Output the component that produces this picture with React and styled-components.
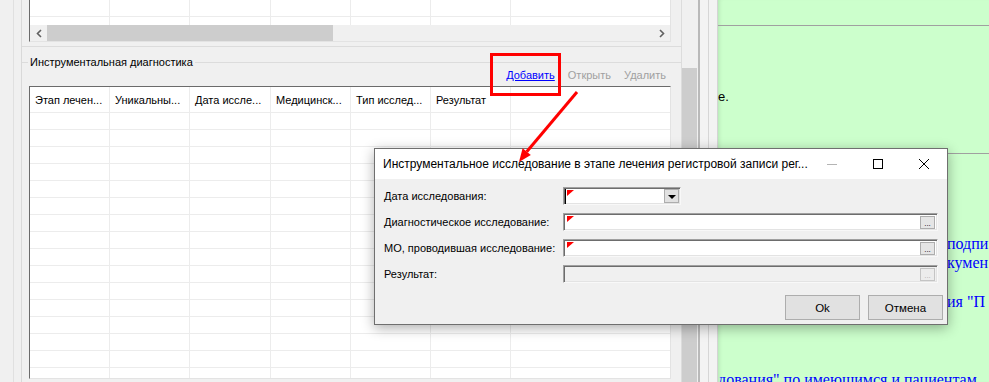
import React from 'react';
import styled, { createGlobalStyle } from 'styled-components';

const GlobalStyle = createGlobalStyle`
  html, body {
    margin: 0;
    padding: 0;
    overflow: hidden;
    background: #f0f0f0;
  }
  body {
    font-family: "Liberation Sans", Arial, sans-serif;
    font-size: 11px;
    color: #000;
  }
  * {
    box-sizing: border-box;
  }
`;

const COLUMNS = '80px 80px 81px 80px 80px 80px 1fr';
const HEADERS = ['Этап лечен...', 'Уникальны...', 'Дата иссле...', 'Медицинск...', 'Тип исслед...', 'Результат', ''];
const EMPTY_ROWS = Array.from({ length: 16 }, (_, i) => i);

const Screen = styled.div`
  position: relative;
  display: flex;
  width: 989px;
  height: 382px;
  overflow: hidden;
`;

const AppArea = styled.div`
  display: flex;
  width: 718px;
  height: 100%;
  background: #f0f0f0;
`;

const Gutter = styled.div`
  width: 22px;
  height: 100%;
  padding-left: 13px;
  border-right: 1px solid #d9d9d9;

  &::before {
    content: '';
    display: block;
    width: 1px;
    height: 100%;
    background: #e0e0e0;
  }
`;

const ContentColumn = styled.div`
  display: flex;
  flex-direction: column;
  width: 660px;
  height: 100%;
  border-right: 1px solid #dcdcdc;
`;

const TopPanel = styled.div`
  height: 47px;
  padding-left: 7px;
  border-bottom: 1px solid #dcdcdc;
`;

const TopGrid = styled.div`
  display: flex;
  flex-direction: column;
  width: 642px;
  height: 42px;
  background: #fff;
  border-left: 1px solid #6b6b6b;
  border-right: 1px solid #e3e3e3;
  border-bottom: 1px solid #e3e3e3;
`;

const GridRow = styled.div`
  display: grid;
  grid-template-columns: ${COLUMNS};
  flex: 0 0 ${(p) => p.$height}px;
  height: ${(p) => p.$height}px;
  border-bottom: ${(p) => (p.$open ? 'none' : '1px solid #ececec')};
`;

const Cell = styled.div`
  display: flex;
  align-items: center;
  padding-left: 5px;
  border-right: 1px solid #ececec;
  white-space: nowrap;
  overflow: hidden;
  font-size: 11px;
  color: #000;

  &:last-child {
    border-right: none;
  }
`;

const HScroll = styled.div`
  display: flex;
  align-items: stretch;
  height: 16px;
  background: #f0f0f0;
`;

const ScrollArrow = styled.div`
  display: flex;
  align-items: center;
  justify-content: center;
  width: 17px;
  color: #606060;
`;

const ScrollTrack = styled.div`
  flex: 1;
  display: flex;
  align-items: stretch;
`;

const HThumb = styled.div`
  width: 286px;
  background: #cdcdcd;
`;

const GroupBox = styled.div`
  flex: 1;
  display: flex;
  flex-direction: column;
  margin-top: 15px;
  padding: 0 10px 0 7px;
  border-top: 1px solid #dcdcdc;
`;

const Legend = styled.div`
  align-self: flex-start;
  margin: -7px 0 0 -1px;
  padding: 0 2px;
  line-height: 13px;
  background: #f0f0f0;
  color: #000;
`;

const Toolbar = styled.div`
  display: flex;
  justify-content: flex-end;
  gap: 13px;
  height: 17px;
  padding-right: 5px;
  line-height: 13px;
  font-size: 11px;
`;

const ToolLink = styled.span`
  color: ${(p) => (p.$enabled ? '#0000ff' : '#a0a0a0')};
  text-decoration: ${(p) => (p.$enabled ? 'underline' : 'none')};
`;

const LowerGrid = styled.div`
  display: flex;
  flex-direction: column;
  height: 293px;
  overflow: hidden;
  background: #fff;
  border-top: 1px solid #6b6b6b;
  border-left: 1px solid #6b6b6b;
  border-right: 1px solid #e3e3e3;
  border-bottom: 1px solid #e3e3e3;
`;

const VScroll = styled.div`
  width: 16px;
  height: 100%;
  padding-top: 68px;
  background: #f0f0f0;
`;

const VThumb = styled.div`
  width: 15px;
  height: 100%;
  background: #cdcdcd;
`;

const Splitter = styled.div`
  display: flex;
  width: 20px;
  height: 100%;
  background: #f3f3f3;
  border-left: 2px solid #b9b9b9;
  border-right: 1px solid #d4d4d4;
  padding-left: 8px;

  &::before {
    content: '';
    width: 1px;
    height: 100%;
    background: #d6d6d6;
  }
`;

const DocPane = styled.div`
  flex: 1;
  height: 100%;
  overflow: hidden;
  background: #ccffcc;
  box-shadow: inset 4px 0 4px -3px rgba(0, 0, 0, 0.12);
  font-family: "Liberation Serif", "Times New Roman", serif;
`;

const PaneRule = styled.div`
  height: 1px;
  margin-top: ${(p) => p.$top}px;
  background: #a0a0a0;
`;

const DocNote = styled.div`
  margin-top: ${(p) => p.$top}px;
  font-family: "Liberation Sans", Arial, sans-serif;
  font-size: 13px;
  line-height: 15px;
  color: #000;
`;

const DocLine = styled.div`
  margin-top: ${(p) => p.$top || 0}px;
  padding-left: ${(p) => p.$indent || 0}px;
  font-size: 16px;
  line-height: 19px;
  color: #0000ff;
  white-space: nowrap;
`;

const Dialog = styled.div`
  position: absolute;
  left: 374px;
  top: 148px;
  z-index: 2;
  width: 574px;
  display: flex;
  flex-direction: column;
  background: #f0f0f0;
  border: 1px solid #6f6f6f;
  box-shadow: 0 3px 12px rgba(0, 0, 0, 0.32);
`;

const TitleBar = styled.div`
  display: flex;
  align-items: center;
  height: 30px;
  padding-left: 8px;
  background: #fff;
`;

const TitleText = styled.div`
  flex: 1;
  font-size: 12px;
  color: #000;
  white-space: nowrap;
`;

const CaptionButton = styled.div`
  display: flex;
  align-items: center;
  justify-content: center;
  width: 46px;
  height: 30px;
`;

const DialogBody = styled.div`
  display: flex;
  flex-direction: column;
  padding-bottom: 4px;
`;

const Form = styled.div`
  display: grid;
  grid-template-columns: 179px 1fr;
  row-gap: 8px;
  padding: 8px 9px 0 9px;
  align-items: center;
`;

const FieldLabel = styled.div`
  font-size: 11px;
  color: #000;
  white-space: nowrap;
`;

const Field = styled.div`
  display: flex;
  align-items: flex-start;
  width: ${(p) => (p.$width ? `${p.$width}px` : 'auto')};
  height: 18px;
  padding: 1px 1px 0 1px;
  background: ${(p) => (p.$disabled ? '#f0f0f0' : '#fff')};
  border-style: solid;
  border-width: 1px;
  border-color: #a0a0a0 #f8f8f8 #f8f8f8 #a0a0a0;
  box-shadow: inset 1px 1px 0 #6d6d6d, inset -1px -1px 0 #e3e3e3;
`;

const Caret = styled.div`
  width: 1px;
  height: 15px;
  margin: 0 1px 0 0;
  background: #000;
`;

const RequiredMark = styled.div`
  width: 0;
  height: 0;
  margin: 1px 0 0 ${(p) => (p.$afterCaret ? 0 : 2)}px;
  border-top: 6px solid #ff0000;
  border-right: 7px solid transparent;
`;

const DropButton = styled.div`
  display: flex;
  align-items: center;
  justify-content: center;
  width: 15px;
  height: 14px;
  margin: 0 0 0 auto;
  background: #e1e1e1;
  border: 1px solid #adadad;

  &::after {
    content: '';
    width: 0;
    height: 0;
    margin-top: 2px;
    border-top: 4px solid #000;
    border-left: 4px solid transparent;
    border-right: 4px solid transparent;
  }
`;

const EllipsisButton = styled.div`
  display: flex;
  align-items: flex-end;
  justify-content: center;
  width: 15px;
  height: 13px;
  margin: 1px 1px 0 auto;
  background: ${(p) => (p.$disabled ? '#ececec' : '#e5e5e5')};
  border: 1px solid ${(p) => (p.$disabled ? '#c4c4c4' : '#adadad')};
  font-size: 8px;
  line-height: 9px;
  color: ${(p) => (p.$disabled ? '#b0b0b0' : '#000')};
`;

const ButtonRow = styled.div`
  display: flex;
  justify-content: flex-end;
  gap: 8px;
  padding: 12px 4px 0 0;
`;

const DialogButton = styled.div`
  display: flex;
  align-items: center;
  justify-content: center;
  width: 75px;
  height: 25px;
  background: #e1e1e1;
  border: 1px solid #adadad;
  font-size: 11.5px;
  color: #000;
`;

const RedFrame = styled.div`
  position: absolute;
  left: 490px;
  top: 53px;
  z-index: 3;
  width: 71px;
  height: 43px;
  border: 3px solid #ff0000;
`;

const PointerArrow = styled.svg`
  position: absolute;
  left: 505px;
  top: 85px;
  z-index: 3;
  overflow: visible;
`;

const Chevron = ({ dir }) => (
  <svg width="6" height="9" viewBox="0 0 6 9">
    <polyline
      points={dir === 'left' ? '5,1 1.5,4.5 5,8' : '1,1 4.5,4.5 1,8'}
      fill="none"
      stroke="#606060"
      strokeWidth="1.6"
    />
  </svg>
);

const App = () => {
  return (
    <>
      <GlobalStyle />
      <Screen>
        <AppArea>
          <Gutter />
          <ContentColumn>
            <TopPanel>
              <TopGrid>
                <GridRow $height={17}>
                  {HEADERS.map((_, i) => (
                    <Cell key={i} />
                  ))}
                </GridRow>
                <GridRow $height={8} $open>
                  {HEADERS.map((_, i) => (
                    <Cell key={i} />
                  ))}
                </GridRow>
                <HScroll>
                  <ScrollArrow>
                    <Chevron dir="left" />
                  </ScrollArrow>
                  <ScrollTrack>
                    <HThumb />
                  </ScrollTrack>
                  <ScrollArrow>
                    <Chevron dir="right" />
                  </ScrollArrow>
                </HScroll>
              </TopGrid>
            </TopPanel>

            <GroupBox>
              <Legend>Инструментальная диагностика</Legend>
              <Toolbar>
                <ToolLink $enabled>Добавить</ToolLink>
                <ToolLink>Открыть</ToolLink>
                <ToolLink>Удалить</ToolLink>
              </Toolbar>
              <LowerGrid>
                <GridRow $height={26}>
                  {HEADERS.map((h, i) => (
                    <Cell key={i}>{h}</Cell>
                  ))}
                </GridRow>
                {EMPTY_ROWS.map((r) => (
                  <GridRow key={r} $height={17}>
                    {HEADERS.map((_, i) => (
                      <Cell key={i} />
                    ))}
                  </GridRow>
                ))}
              </LowerGrid>
            </GroupBox>
          </ContentColumn>
          <VScroll>
            <VThumb />
          </VScroll>
          <Splitter />
        </AppArea>

        <DocPane>
          <PaneRule $top={25} />
          <DocNote $top={63}>е.</DocNote>
          <PaneRule $top={49} />
          <DocLine $top={80} $indent={229}>подпи</DocLine>
          <DocLine $indent={229}>кумен</DocLine>
          <DocLine $top={20} $indent={229}>ия "П</DocLine>
          <DocLine $top={59}>дования" по имеющимся и пациентам</DocLine>
        </DocPane>

        <Dialog>
          <TitleBar>
            <TitleText>
              Инструментальное исследование в этапе лечения регистровой записи рег...
            </TitleText>
            <CaptionButton>
              <svg width="10" height="10" viewBox="0 0 10 10">
                <line x1="0" y1="5.5" x2="10" y2="5.5" stroke="#b4b4b4" strokeWidth="1" />
              </svg>
            </CaptionButton>
            <CaptionButton>
              <svg width="10" height="10" viewBox="0 0 10 10">
                <rect x="0.5" y="0.5" width="9" height="9" fill="none" stroke="#000" strokeWidth="1" />
              </svg>
            </CaptionButton>
            <CaptionButton>
              <svg width="10" height="10" viewBox="0 0 10 10">
                <path d="M0 0 L10 10 M10 0 L0 10" stroke="#000" strokeWidth="1" />
              </svg>
            </CaptionButton>
          </TitleBar>

          <DialogBody>
            <Form>
              <FieldLabel>Дата исследования:</FieldLabel>
              <Field $width={118}>
                <Caret />
                <RequiredMark $afterCaret />
                <DropButton />
              </Field>

              <FieldLabel>Диагностическое исследование:</FieldLabel>
              <Field>
                <RequiredMark />
                <EllipsisButton>...</EllipsisButton>
              </Field>

              <FieldLabel>МО, проводившая исследование:</FieldLabel>
              <Field>
                <RequiredMark />
                <EllipsisButton>...</EllipsisButton>
              </Field>

              <FieldLabel>Результат:</FieldLabel>
              <Field $disabled>
                <EllipsisButton $disabled>...</EllipsisButton>
              </Field>
            </Form>
            <ButtonRow>
              <DialogButton>Ok</DialogButton>
              <DialogButton>Отмена</DialogButton>
            </ButtonRow>
          </DialogBody>
        </Dialog>

        <RedFrame />
        <PointerArrow width="80" height="85" viewBox="0 0 80 85">
          <line x1="72" y1="7" x2="21.7" y2="66.8" stroke="#ff0000" strokeWidth="3" />
          <polygon points="14,77 25.8,70 17.6,63.3" fill="#ff0000" />
        </PointerArrow>
      </Screen>
    </>
  );
};

export default App;
